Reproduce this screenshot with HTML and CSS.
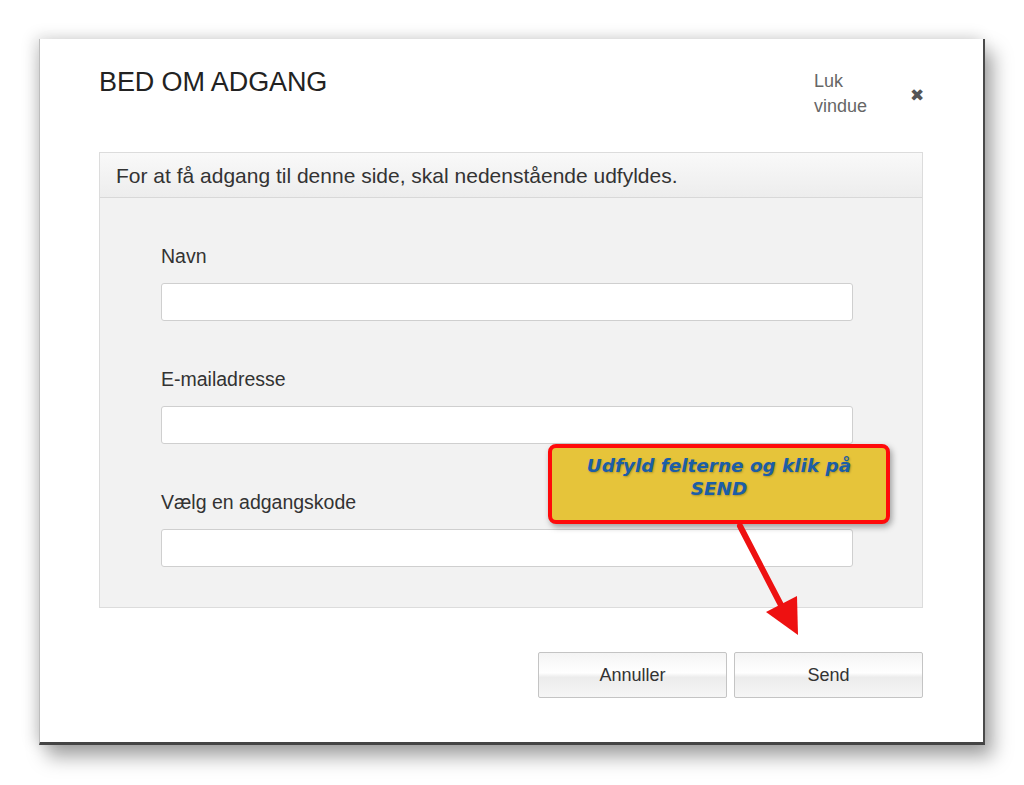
FILE: index.html
```html
<!DOCTYPE html>
<html lang="da">
<head>
<meta charset="utf-8">
<title>Bed om adgang</title>
<link rel="stylesheet" href="styles.css">
</head>
<body>
<div class="stage">
  <div class="dialog">
    <div class="dialog-head">
      <h1 class="title">BED OM ADGANG</h1>
      <div class="close">
        <span class="close-text">Luk<br>vindue</span>
        <span class="close-x">&#x2716;</span>
      </div>
    </div>
    <div class="panel">
      <div class="panel-head">For at få adgang til denne side, skal nedenstående udfyldes.</div>
      <div class="panel-body">
        <div class="field">
          <label class="label">Navn</label>
          <div class="input"></div>
        </div>
        <div class="field">
          <label class="label">E-mailadresse</label>
          <div class="input"></div>
        </div>
        <div class="field">
          <label class="label">Vælg en adgangskode</label>
          <div class="input"></div>
        </div>
      </div>
    </div>
    <div class="actions">
      <button class="btn">Annuller</button>
      <button class="btn">Send</button>
    </div>
    <div class="callout">Udfyld felterne og klik på<br>SEND</div>
    <svg class="arrow" width="120" height="140" viewBox="0 0 120 140">
      <line x1="10" y1="3" x2="52" y2="84" stroke="#ee1111" stroke-width="6" stroke-linecap="round"/>
      <polygon points="36,89 67,73 68,112" fill="#ee1111"/>
    </svg>
  </div>
</div>
</body>
</html>
```
FILE: styles.css
```css
* { box-sizing: border-box; }
html, body { margin: 0; padding: 0; background: #ffffff; }
body { font-family: "Liberation Sans", Arial, sans-serif; color: #333; }
.stage { padding: 39px 0 0 39px; width: 1024px; height: 785px; overflow: hidden; }
.dialog {
  position: relative;
  width: 946px;
  height: 706px;
  background: #fff;
  border-left: 1px solid #bdbdbd;
  border-right: 2px solid #4a4a4a;
  border-bottom: 3px solid #444;
  box-shadow: 8px 12px 18px rgba(0,0,0,0.35), -4px -2px 14px rgba(0,0,0,0.15);
  padding: 0 60px 0 59px;
}
.dialog-head { display: flex; align-items: flex-start; height: 113px; }
.title {
  margin: 0;
  padding-top: 27px;
  font-size: 27px;
  line-height: 32px;
  font-weight: normal;
  color: #222;
  letter-spacing: -0.1px;
  flex: 1;
}
.close { display: flex; align-items: center; padding-top: 30px; }
.close-text { font-size: 18px; line-height: 25px; color: #666; width: 96px; }
.close-x { font-size: 17px; color: #555; padding-top: 2px; margin-right: -1px; }
.panel { border: 1px solid #dcdcdc; background: #f2f2f2; width: 824px; }
.panel-head {
  height: 45px;
  padding: 10px 16px 0;
  font-size: 21px;
  line-height: 25px;
  color: #333;
  background: linear-gradient(#f9f9f9, #ededed);
  border-bottom: 1px solid #d8d8d8;
}
.panel-body { padding: 47px 0 40px 61px; display: flex; flex-direction: column; gap: 47px; }
.field { display: flex; flex-direction: column; }
.label { font-size: 19.5px; line-height: 22px; color: #333; margin-bottom: 16px; }
.input {
  width: 692px;
  height: 38px;
  background: #fff;
  border: 1px solid #cfcfcf;
  border-radius: 3px;
}
.actions { display: flex; justify-content: flex-end; gap: 7px; padding-top: 44px; width: 824px; }
.btn {
  width: 189px;
  height: 46px;
  border: 1px solid #c4c4c4;
  border-radius: 2px;
  background: linear-gradient(#f4f4f4 0%, #ffffff 45%, #ececec 55%, #f6f6f6 100%);
  font-family: "Liberation Sans", Arial, sans-serif;
  font-size: 18px;
  color: #333;
}
.callout {
  position: absolute;
  left: 508px;
  top: 405px;
  width: 342px;
  height: 80px;
  background: #e6c43a;
  border: 4px solid #ff0a0a;
  border-radius: 8px;
  box-shadow: 2px 3px 6px rgba(0,0,0,0.35);
  text-align: center;
  font-family: "DejaVu Sans", Verdana, sans-serif;
  font-weight: bold;
  font-style: italic;
  font-size: 18.4px;
  line-height: 23px;
  color: #1c5ea6;
  padding-top: 6px;
  text-shadow: 1px 1px 2px rgba(0,0,0,0.25);
}
.arrow { position: absolute; left: 690px; top: 484px; }
```
